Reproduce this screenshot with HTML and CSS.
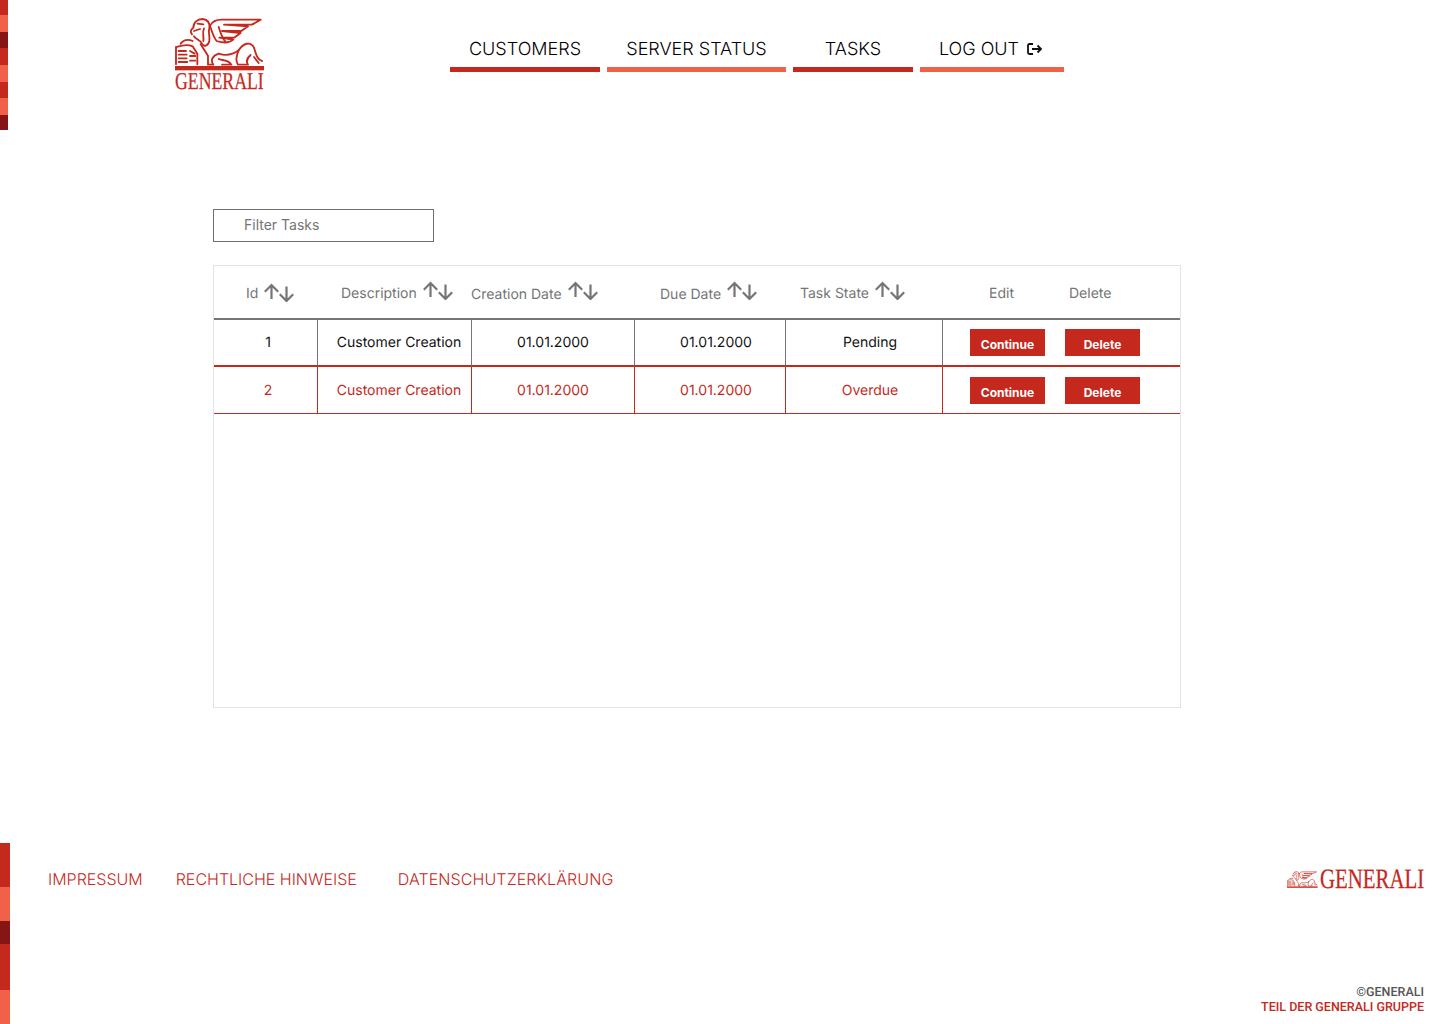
FILE: index.html
```html
<!DOCTYPE html>
<html lang="de">
<head>
<meta charset="utf-8">
<title>Tasks</title>
<link rel="stylesheet" href="styles.css">
</head>
<body>
<svg class="defs" width="0" height="0" aria-hidden="true">
  <defs>
    <g id="lion" fill="none" stroke="#c5281c" stroke-width="5.5" stroke-linejoin="round" stroke-linecap="round">
      <rect x="45" y="197" width="267" height="13" fill="#c5281c" stroke="none"/>
      <path d="M48 192V140C62 136 80 130 98 138L112 160V192"/>
      <path d="M62 130C70 120 84 116 98 122"/>
      <path d="M56 152H78M56 163H80M56 174H80M56 185H82M90 152L104 160M90 167H106M90 181H106"/>
      <path d="M96 102C90 94 92 88 100 82C100 66 112 56 128 56C142 58 150 66 148 82C144 94 150 108 148 122C144 138 132 140 126 130C120 118 108 118 102 108"/>
      <path d="M102 92L120 86M112 70L130 72M132 84C126 96 132 108 130 122"/>
      <path d="M122 132L144 166V193H160C150 180 158 166 176 160C200 168 220 162 236 150C250 128 272 122 282 142C288 162 292 178 306 182"/>
      <path d="M236 150C228 168 226 182 234 193H264C256 180 262 172 272 164M176 176C192 182 206 178 214 193H186M282 170L296 188"/>
      <path d="M150 76C158 62 168 58 184 58H302L276 73H192L264 78L244 92H186L242 98L222 112H178L220 118C206 130 188 128 170 122C160 110 156 94 150 76Z"/>
      <path d="M176 80C182 100 186 112 196 124"/>
    </g>
    <g id="sort" fill="none" stroke="#757575" stroke-width="2.2">
      <path d="M7.5 16V2M0.8 8.8L7.5 2L14.2 8.8"/>
      <path d="M22.5 3.5V18M15.8 11.2L22.5 18L29.2 11.2"/>
    </g>
  </defs>
</svg>

<header class="header">
  <div class="stripe stripe-top">
    <span class="band band-red b15"></span>
    <span class="band band-coral b17"></span>
    <span class="band band-dark b16"></span>
    <span class="band band-red b17"></span>
    <span class="band band-coral b17"></span>
    <span class="band band-red b16"></span>
    <span class="band band-coral b17"></span>
    <span class="band band-dark b15"></span>
  </div>
  <a class="logo" href="#">
    <svg class="logo-mark" viewBox="45 50 270 162"><use href="#lion"/></svg>
    <span class="logo-word">GENERALI</span>
  </a>
  <nav class="nav">
    <a class="nav-item nav-customers" href="#">CUSTOMERS</a>
    <a class="nav-item nav-coral nav-server" href="#">SERVER STATUS</a>
    <a class="nav-item nav-tasks" href="#">TASKS</a>
    <a class="nav-item nav-coral nav-logout" href="#">LOG OUT
      <svg class="logout-icon" viewBox="0 0 16 12" fill="none" stroke="#111" stroke-width="1.8">
        <path d="M6 1H2.4Q1 1 1 2.4V9.6Q1 11 2.4 11H6"/>
        <path d="M5 6H14M10.5 2.5L14 6L10.5 9.5"/>
      </svg>
    </a>
  </nav>
</header>

<main class="main">
  <input class="filter" type="text" placeholder="Filter Tasks">
  <div class="table-box">
    <table class="tasks">
      <colgroup>
        <col class="c-id"><col class="c-desc"><col class="c-created"><col class="c-due"><col class="c-state"><col class="c-edit"><col class="c-delete">
      </colgroup>
      <thead>
        <tr>
          <th class="h-id"><span class="th-in"><span class="label">Id</span> <svg class="sort sort-low" viewBox="0 0 30 19"><use href="#sort"/></svg></span></th>
          <th class="h-desc"><span class="th-in"><span class="label">Description</span> <svg class="sort" viewBox="0 0 30 19"><use href="#sort"/></svg></span></th>
          <th class="h-created"><span class="th-in th-shift"><span class="label label-low">Creation Date</span> <svg class="sort" viewBox="0 0 30 19"><use href="#sort"/></svg></span></th>
          <th class="h-due"><span class="th-in"><span class="label label-low">Due Date</span> <svg class="sort" viewBox="0 0 30 19"><use href="#sort"/></svg></span></th>
          <th class="h-state"><span class="th-in"><span class="label">Task State</span> <svg class="sort" viewBox="0 0 30 19"><use href="#sort"/></svg></span></th>
          <th class="h-edit">Edit</th>
          <th class="h-delete">Delete</th>
        </tr>
      </thead>
      <tbody>
        <tr>
          <td class="d-id">1</td>
          <td class="d-desc">Customer Creation</td>
          <td>01.01.2000</td>
          <td class="d-due">01.01.2000</td>
          <td class="d-state">Pending</td>
          <td class="d-action d-edit"><button class="btn">Continue</button></td>
          <td class="d-action d-delete"><button class="btn">Delete</button></td>
        </tr>
        <tr class="overdue">
          <td class="d-id">2</td>
          <td class="d-desc">Customer Creation</td>
          <td>01.01.2000</td>
          <td class="d-due">01.01.2000</td>
          <td class="d-state">Overdue</td>
          <td class="d-action d-edit"><button class="btn">Continue</button></td>
          <td class="d-action d-delete"><button class="btn">Delete</button></td>
        </tr>
      </tbody>
    </table>
  </div>
</main>

<footer class="footer">
  <div class="stripe stripe-bottom">
    <span class="band band-red b44"></span>
    <span class="band band-coral b34"></span>
    <span class="band band-dark b23"></span>
    <span class="band band-red b46"></span>
    <span class="band band-coral b34"></span>
  </div>
  <div class="footer-body">
    <div class="footer-top">
      <nav class="footer-links">
        <a class="flink-a" href="#">IMPRESSUM</a>
        <a class="flink-b" href="#">RECHTLICHE HINWEISE</a>
        <a class="flink-c" href="#">DATENSCHUTZERKLÄRUNG</a>
      </nav>
      <div class="footer-logo">
        <svg class="footer-mark" viewBox="45 50 270 162" preserveAspectRatio="none"><use href="#lion"/></svg>
        <span class="footer-word">GENERALI</span>
      </div>
    </div>
    <div class="legal">
      <div class="legal-grey">©GENERALI</div>
      <div class="legal-red">TEIL DER GENERALI GRUPPE</div>
    </div>
  </div>
</footer>
</body>
</html>
```

FILE: styles.css
```css
* { box-sizing: border-box; }

html, body { margin: 0; padding: 0; }

body {
  width: 1440px;
  height: 1024px;
  display: flex;
  flex-direction: column;
  background: #fff;
  font-family: Inter, "Liberation Sans", sans-serif;
  color: #111;
  overflow: hidden;
  text-rendering: geometricPrecision;
}

a { color: inherit; text-decoration: none; }

.defs { position: absolute; }

/* colour stripes */
.stripe { display: flex; flex-direction: column; flex: none; }
.stripe-top { width: 8px; height: 130px; }
.stripe-bottom { width: 10px; height: 181px; }
.band { display: block; }
.band-red { background: #c5281c; }
.band-coral { background: #f16149; }
.band-dark { background: #861616; }
.b15 { height: 15px; }
.b16 { height: 16px; }
.b17 { height: 17px; }
.b23 { height: 23px; }
.b34 { height: 34px; }
.b44 { height: 44px; }
.b46 { height: 46px; }

/* header */
.header { display: flex; align-items: flex-start; height: 130px; flex: none; }

.logo {
  display: flex;
  flex-direction: column;
  width: 90px;
  margin: 17px 0 0 167px;
}
.logo-mark { width: 90px; height: 54px; display: block; flex: none; }
.logo-word, .footer-word {
  display: block;
  flex: none;
  font-family: "Liberation Serif", serif;
  color: #c5281c;
  -webkit-text-stroke: 0.25px #c5281c;
  white-space: nowrap;
  transform-origin: left center;
}
.logo-word {
  width: 120px;
  height: 20px;
  font-size: 24px;
  line-height: 20px;
  margin-top: 1px;
  transform: scaleX(0.74);
}
.footer-word {
  width: 141px;
  height: 22px;
  margin-top: 2px;
  margin-right: -37px;
  font-size: 28px;
  line-height: 22px;
  transform: scaleX(0.745);
}

.nav { display: flex; gap: 7px; margin: 36px 0 0 185px; }
.nav-item {
  display: flex;
  align-items: center;
  justify-content: center;
  gap: 8px;
  height: 36px;
  padding-bottom: 4px;
  border-bottom: 5px solid #c5281c;
  font-size: 18px;
  font-weight: 300;
  color: #000;
  white-space: nowrap;
}
.nav-coral { border-bottom-color: #f16149; }
.nav-customers { width: 150px; }
.nav-server { width: 179px; }
.nav-tasks { width: 120px; }
.nav-logout { width: 144px; padding-right: 2px; }
.logout-icon { width: 16px; height: 12px; flex: none; margin-bottom: 2px; }

/* main */
.main { flex: 1; padding: 79px 0 0 213px; }

.filter {
  display: block;
  width: 221px;
  height: 33px;
  padding: 0 0 2px 30px;
  border: 1px solid #6f6f6f;
  border-radius: 0;
  outline: none;
  font: 14px Inter, sans-serif;
  color: #111;
}
.filter::placeholder { color: #757575; opacity: 1; }

.table-box {
  width: 968px;
  height: 443px;
  margin-top: 23px;
  border: 1px solid #e3e3e3;
}

.tasks {
  width: 966px;
  table-layout: fixed;
  border-collapse: separate;
  border-spacing: 0;
  font-size: 14px;
}
.c-id { width: 104px; }
.c-desc { width: 154px; }
.c-created { width: 163px; }
.c-due { width: 151px; }
.c-state { width: 157px; }
.c-edit { width: 115px; }
.c-delete { width: 122px; }

.tasks th {
  height: 54px;
  padding: 0;
  border-bottom: 2px solid #757575;
  color: #757575;
  font-weight: 400;
  text-align: left;
  white-space: nowrap;
}
.th-in { display: flex; align-items: center; gap: 6px; }
.th-shift { margin-left: -1px; }
.sort { width: 30px; height: 19px; flex: none; margin-bottom: 3px; }
.sort-low { margin-bottom: 0; margin-top: 1px; }
.label { position: relative; top: 1px; }
.label-low { top: 2px; }
.tasks .h-id { padding-left: 32px; }
.tasks .h-desc { padding-left: 23px; }
.tasks .h-created { padding-left: 0; }
.tasks .h-due { padding-left: 25px; }
.tasks .h-state { padding-left: 14px; }
.tasks .h-edit { padding: 2px 0 0 46px; }
.tasks .h-delete { padding: 2px 0 0 11px; }

.tasks td {
  height: 47px;
  padding: 0 0 1px;
  border-right: 1px solid #757575;
  border-bottom: 2px solid #c5281c;
  text-align: center;
  white-space: nowrap;
}
.tasks .overdue td { padding-top: 1px; padding-bottom: 0; }
.tasks .d-id { padding-left: 5px; }
.tasks .d-desc { padding-left: 9px; }
.tasks .d-due { padding-left: 12px; }
.tasks .d-state { padding-left: 12px; }
.tasks .d-action { border-right: 0; text-align: left; padding-bottom: 0; }
.tasks .overdue .d-action { padding-top: 0; }
.tasks .d-edit { padding-left: 27px; }
.tasks .d-delete { padding-left: 7px; }

.overdue td {
  color: #c5281c;
  border-right-color: #c5281c;
  border-bottom-width: 1px;
}

.btn {
  display: block;
  width: 75px;
  height: 27px;
  margin: 0;
  padding: 4px 0 0;
  border: 0;
  border-radius: 0;
  background: #c5281c;
  color: #fff;
  font: 700 12px Inter, sans-serif;
}

/* footer */
.footer { display: flex; height: 181px; flex: none; }
.footer-body {
  flex: 1;
  display: flex;
  flex-direction: column;
  justify-content: space-between;
  padding: 24px 16px 9px 38px;
}
.footer-top { display: flex; justify-content: space-between; align-items: center; }
.footer-links { display: flex; font-size: 16px; font-weight: 300; color: #c5281c; }
.flink-a { margin-right: 33px; }
.flink-b { margin-right: 41px; }
.flink-c { letter-spacing: 0.1px; }
.footer-logo { display: flex; align-items: center; gap: 2px; }
.footer-mark { width: 31px; height: 17px; display: block; }

.legal {
  text-align: right;
  font-family: Roboto, "Liberation Sans", sans-serif;
  font-size: 12.5px;
  font-weight: 500;
  line-height: 15px;
}
.legal-grey { color: #555; }
.legal-red { color: #c5281c; }
```
